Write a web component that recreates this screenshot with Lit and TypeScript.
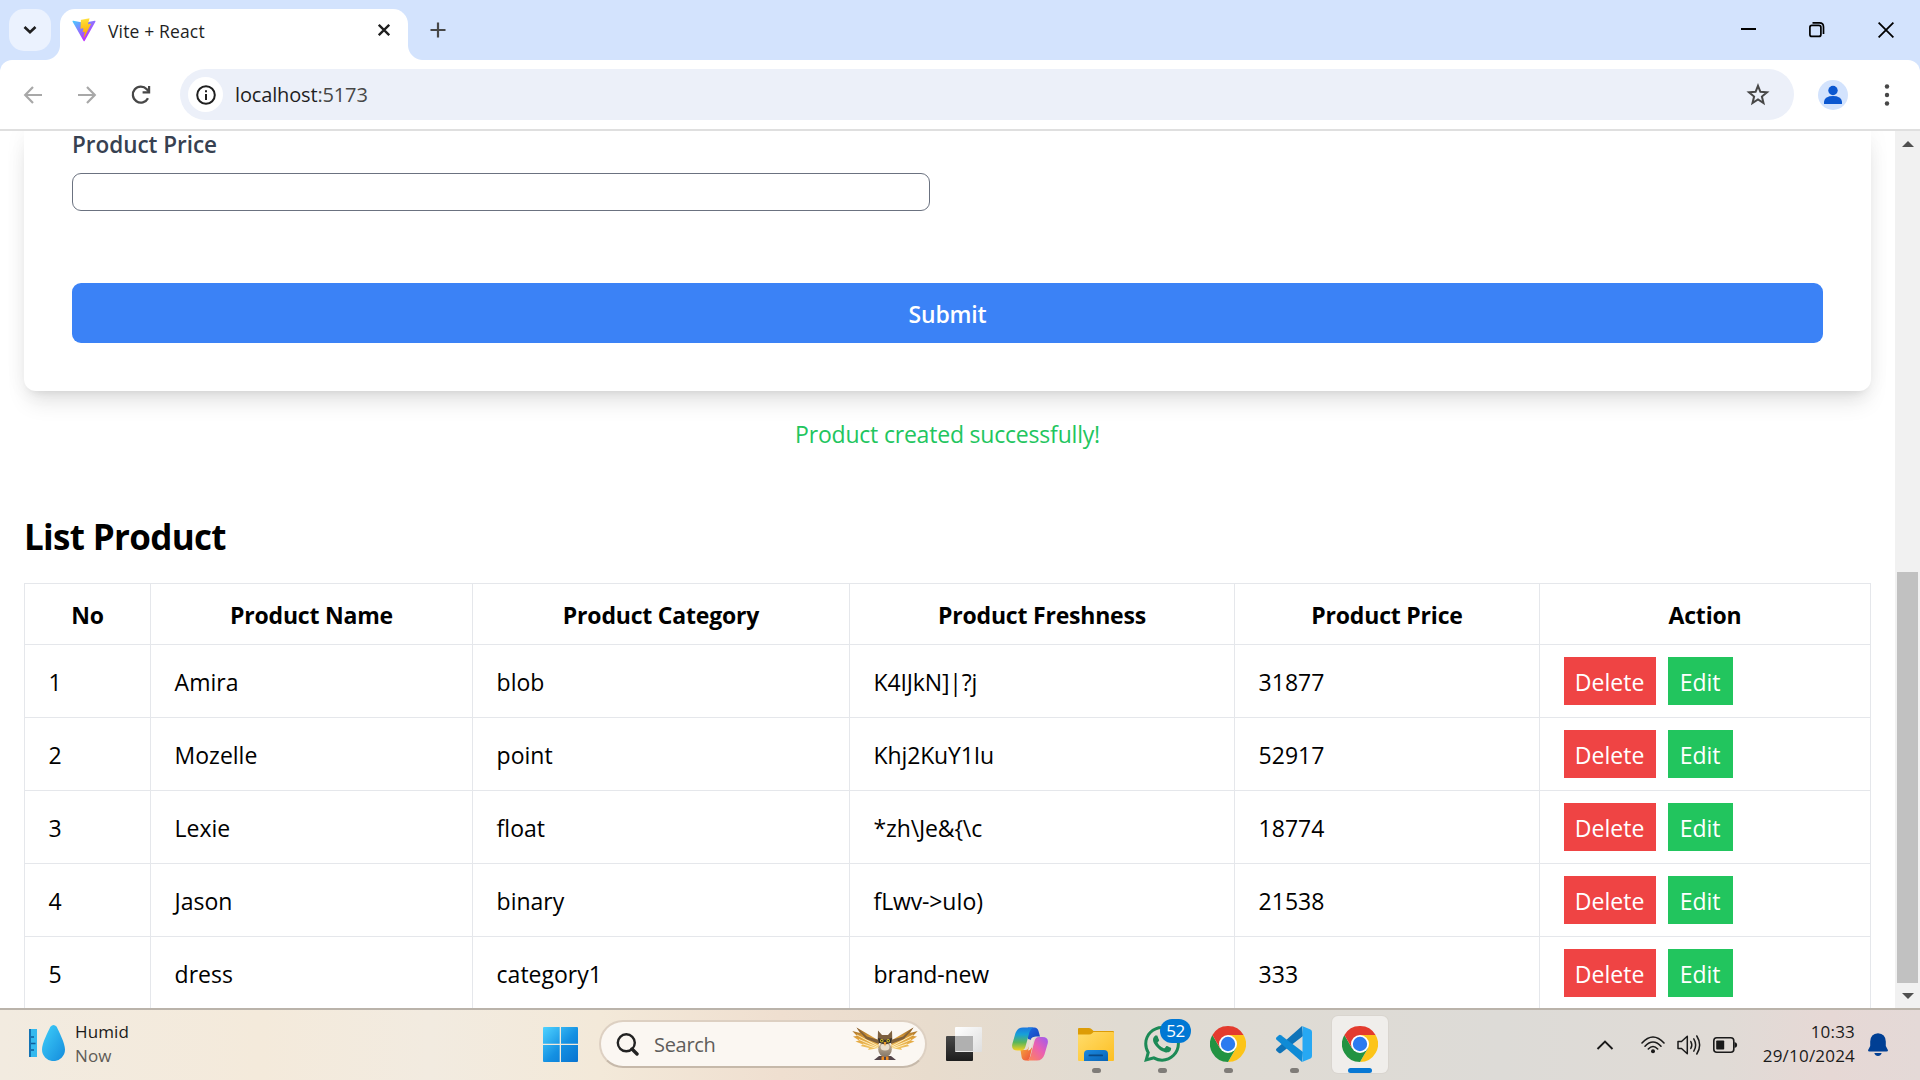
import { LitElement, html, css } from "lit";
import { customElement } from "lit/decorators.js";

interface Product {
  no: number;
  name: string;
  category: string;
  freshness: string;
  price: string;
}

const PRODUCTS: Product[] = [
  { no: 1, name: "Amira", category: "blob", freshness: "K4IJkN]|?j", price: "31877" },
  { no: 2, name: "Mozelle", category: "point", freshness: "Khj2KuY1Iu", price: "52917" },
  { no: 3, name: "Lexie", category: "float", freshness: "*zh\\Je&{\\c", price: "18774" },
  { no: 4, name: "Jason", category: "binary", freshness: "fLwv->uIo)", price: "21538" },
  { no: 5, name: "dress", category: "category1", freshness: "brand-new", price: "333" },
];

const chevronDown = html`<svg width="14" height="10" viewBox="0 0 14 10"><path d="M1.5 2 L7 7.3 L12.5 2" fill="none" stroke="#1f1f1f" stroke-width="2.6"/></svg>`;

const viteLogo = html`<svg width="24" height="24" viewBox="0 0 410 404">
  <defs>
    <linearGradient id="va" x1="6" y1="33" x2="235" y2="344" gradientUnits="userSpaceOnUse"><stop stop-color="#41D1FF"/><stop offset="1" stop-color="#BD34FE"/></linearGradient>
    <linearGradient id="vb" x1="194.651" y1="8.818" x2="236.076" y2="292.989" gradientUnits="userSpaceOnUse"><stop stop-color="#FFEA83"/><stop offset=".083" stop-color="#FFDD35"/><stop offset="1" stop-color="#FFA800"/></linearGradient>
  </defs>
  <path fill="url(#va)" d="M399.641 59.5246L215.643 388.545C211.844 395.338 202.084 395.378 198.228 388.618L10.5817 59.5563C6.38087 52.1896 12.6802 43.2665 21.0281 44.7586L205.223 77.6824C206.398 77.8924 207.601 77.8904 208.776 77.6763L389.119 44.8058C397.439 43.2894 403.768 52.1434 399.641 59.5246Z"/>
  <path fill="url(#vb)" d="M292.965 1.5744L156.801 28.2552C154.563 28.6937 152.906 30.5903 152.771 32.8664L144.395 174.33C144.198 177.662 147.258 180.248 150.51 179.498L188.42 170.749C191.967 169.931 195.172 173.055 194.443 176.622L183.18 231.775C182.422 235.487 185.907 238.661 189.532 237.56L212.947 230.446C216.577 229.344 220.065 232.527 219.297 236.242L201.398 322.875C200.278 328.294 207.486 331.249 210.492 326.603L212.5 323.5L323.454 102.072C325.312 98.3645 322.108 94.137 318.036 94.9228L279.014 102.454C275.347 103.161 272.227 99.746 273.262 96.1583L298.731 7.86689C299.767 4.27314 296.636 0.855181 292.965 1.5744Z"/>
</svg>`;

const chromeLogo = html`<svg width="36" height="36" viewBox="0 0 36 36">
  <circle cx="18" cy="18" r="17.500" fill="#fff"/>
  <path d="M18 18 L18 9 L33.59 9 A18 18 0 0 1 18 36 L25.79 22.5 Z" fill="#fcc419"/>
  <path d="M2.41 9 A18 18 0 0 0 18 36 L25.79 22.5 L18 18 L10.21 22.5 Z" fill="#229342"/>
  <path d="M2.41 9 A18 18 0 0 1 33.59 9 L18 9 L18 18 L10.21 22.5 Z" fill="#e33b2e"/>
  <circle cx="18" cy="18" r="9" fill="#fff"/>
  <circle cx="18" cy="18" r="7.2" fill="#2b7bf0"/>
</svg>`;

const weatherIcon = html`<svg width="36" height="36" viewBox="0 0 36 36">
  <defs>
    <linearGradient id="wd" x1="0" y1="0" x2="1" y2="1"><stop offset="0" stop-color="#3fd0fa"/><stop offset="1" stop-color="#148bdc"/></linearGradient>
  </defs>
  <rect x="0" y="4" width="8" height="28" fill="#35b9ee"/><rect x="0" y="4" width="2" height="28" fill="#1373b4"/>
  <path d="M2 12h3M2 18.5h4.5M2 25h3" stroke="#0f5f9c" stroke-width="1.6"/>
  <path d="M21.4 1.8 Q24.5 -1.8 27.7 1.8 C30 7 36 18 36 24.6 A11.5 11.5 0 0 1 13 24.6 C13 18 19 7 21.4 1.8 Z" fill="url(#wd)"/>
</svg>`;

const startIcon = html`<svg width="35" height="35" viewBox="0 0 35 35">
  <defs><linearGradient id="st" x1="0" y1="0" x2="35" y2="35" gradientUnits="userSpaceOnUse"><stop stop-color="#4fd3ff"/><stop offset=".55" stop-color="#1490e2"/><stop offset="1" stop-color="#0873d0"/></linearGradient></defs>
  <path fill="url(#st)" d="M1 0H16.7V16.7H0V1Q0 0 1 0ZM18 0H34Q35 0 35 1V16.7H18ZM0 18H16.7V35H1Q0 35 0 34ZM18 18H35V34Q35 35 34 35H18Z"/>
</svg>`;

const owlIcon = html`<svg width="66" height="34" viewBox="0 0 66 34">
  <defs>
    <linearGradient id="ow" x1="0" y1="0" x2="0" y2="1"><stop offset="0" stop-color="#8a5a20"/><stop offset=".45" stop-color="#dfa03a"/><stop offset="1" stop-color="#f3c766"/></linearGradient>
    <linearGradient id="ob" x1="0" y1="0" x2="0" y2="1"><stop offset="0" stop-color="#c9b69c"/><stop offset="1" stop-color="#857768"/></linearGradient>
    <g id="wing">
      <path d="M27 21 L26 13 L4.500 .5 L8 6 L.3 4 L5 9 L1 9.500 L7 13.500 L3.500 14.500 L11 17.500 L8.500 19 L17 21 L16 23 Z" fill="url(#ow)"/>
      <path d="M4.500 .5 L15 9.500 L27 13 L27 17 L14 12 Z" fill="#80603a"/>
      <path d="M5 8 L26 19 M7 12.500 L26 20.500 M11 17 L25 21.500" stroke="#fff2c9" stroke-width=".9"/>
    </g>
  </defs>
  <use href="#wing"/><use href="#wing" transform="translate(66 0) scale(-1 1)"/>
  <path d="M22 33 L27 29 L39 29 L44 33 Z" fill="#54454a"/>
  <ellipse cx="33" cy="22.500" rx="6.800" ry="7.500" fill="url(#ob)"/>
  <ellipse cx="33" cy="20" rx="4.500" ry="3.500" fill="#eadfcd"/>
  <path d="M26 3.500 L30 8 L36 8 L40 3.500 L40.300 13 Q38 17 33 17.500 Q28 17 25.700 13 Z" fill="#7d603f"/>
  <path d="M26 11 L33 13 L40 11 L39 16 L33 17 L27 16 Z" fill="#33302c"/>
  <circle cx="29.800" cy="13.800" r="1.700" fill="#d9c52c"/><circle cx="36.200" cy="13.800" r="1.700" fill="#d9c52c"/>
  <circle cx="29.800" cy="13.800" r=".8" fill="#111"/><circle cx="36.200" cy="13.800" r=".8" fill="#111"/>
  <path d="M31.500 15 L34.500 15 L33 19.500 Z" fill="#f0a030"/>
  <path d="M29.500 29.500h2.500v3.500h-2.500zM34 29.500h2.500v3.500h-2.500z" fill="#ee8c22"/>
</svg>`;

const taskViewIcon = html`<svg width="36" height="36" viewBox="0 0 36 36">
  <defs>
    <linearGradient id="td" x1="0" y1="0" x2="0" y2="1"><stop stop-color="#484848"/><stop offset="1" stop-color="#1d1d1d"/></linearGradient>
    <linearGradient id="tl" x1="0" y1="0" x2="1" y2="1"><stop stop-color="#fff"/><stop offset="1" stop-color="#dedede"/></linearGradient>
  </defs>
  <rect x="0" y="10" width="27" height="25" rx="1" fill="url(#td)"/>
  <rect x="9" y="1" width="27" height="25" rx="1" fill="url(#tl)"/>
  <rect x="9" y="10" width="18" height="15" fill="#b0b0b0"/>
</svg>`;

const copilotIcon = html`<svg width="36" height="34" viewBox="0 0 36 34">
  <defs>
    <linearGradient id="c1" x1="0" y1="0" x2="0" y2="1"><stop stop-color="#1b78e0"/><stop offset=".3" stop-color="#17a0d8"/><stop offset=".65" stop-color="#5bb65a"/><stop offset="1" stop-color="#f5d020"/></linearGradient>
    <linearGradient id="c2" x1="1" y1="0" x2="0" y2="1"><stop stop-color="#9a5cf2"/><stop offset=".45" stop-color="#ea5fb2"/><stop offset="1" stop-color="#ff8a4c"/></linearGradient>
    <linearGradient id="c3" x1="0" y1="0" x2="1" y2="1"><stop stop-color="#1a6ae0"/><stop offset="1" stop-color="#1b3fbc"/></linearGradient>
    <linearGradient id="c4" x1="0" y1="0" x2="1" y2="1"><stop stop-color="#f5a93c"/><stop offset="1" stop-color="#ee4b3c"/></linearGradient>
  </defs>
  <path d="M16 .5 H22.500 Q25.500 .5 26.500 4 L28 9.500 H24 Q20.500 9.500 19.500 13 L16 12 Z" fill="url(#c3)"/>
  <path d="M8.500 23 H13.500 Q16 23 17 19.500 L20 21 L17 33.500 H13.500 Q10.500 33.500 9.700 30.500 Z" fill="url(#c4)"/>
  <path d="M11 .5 H21.500 Q18.500 1.500 17.500 5 L13.500 19.500 Q12.500 23.500 9 23.500 H5.500 Q-1 23.500 .3 17 L3.500 6 Q5.500 .5 11 .5 Z" fill="url(#c1)"/>
  <path d="M25 33.500 H14.500 Q17.500 32.500 18.500 29 L22.500 14 Q23.500 10 27 10 H30.500 Q37 10 35.700 16.500 L32.500 27.500 Q30.500 33.500 25 33.500 Z" fill="url(#c2)"/>
  <path d="M19.300 11.500 Q20 10 22 10 L19 21.500 Q18.300 23.500 16 23.500 Z" fill="#ebe3da"/>
</svg>`;

const explorerIcon = html`<svg width="36" height="34" viewBox="0 0 36 34">
  <defs>
    <linearGradient id="ex" x1="0" y1="0" x2="1" y2="1"><stop stop-color="#ffdc6c"/><stop offset="1" stop-color="#fdbf22"/></linearGradient>
    <linearGradient id="eb" x1="0" y1="0" x2="1" y2="1"><stop stop-color="#1b8ae0"/><stop offset="1" stop-color="#0a64b6"/></linearGradient>
  </defs>
  <path d="M0 2 Q0 1 1 1 H11 Q13 1 14 2.500 L15.500 4 H35 Q36 4 36 5 V12 H0 Z" fill="#dd9c06"/>
  <path d="M0 7.500 H11 Q13 7.500 14.500 6 L15.500 5 H35 Q36 5 36 6 V33 Q36 34 35 34 H1 Q0 34 0 33 Z" fill="url(#ex)"/>
  <path d="M6 34 V27 Q6 23 10 23 H26 Q30 23 30 27 V34 Z" fill="url(#eb)"/>
  <rect x="10.500" y="27.500" width="14.500" height="1.800" rx=".9" fill="#0a4a86"/>
</svg>`;

const whatsappIcon = html`<svg width="36" height="36" viewBox="0 0 24 24"><path fill="#1c8a56" d="M17.472 14.382c-.297-.149-1.758-.867-2.03-.967-.273-.099-.471-.148-.67.15-.197.297-.767.966-.94 1.164-.173.199-.347.223-.644.075-.297-.15-1.255-.463-2.39-1.475-.883-.788-1.48-1.761-1.653-2.059-.173-.297-.018-.458.13-.606.134-.133.298-.347.446-.52.149-.174.198-.298.298-.497.099-.198.05-.371-.025-.52-.075-.149-.669-1.612-.916-2.207-.242-.579-.487-.5-.669-.51-.173-.008-.371-.01-.57-.01-.198 0-.52.074-.792.372-.272.297-1.040 1.016-1.040 2.479 0 1.462 1.065 2.875 1.213 3.074.149.198 2.096 3.200 5.077 4.487.709.306 1.262.489 1.694.625.712.227 1.360.195 1.871.118.571-.085 1.758-.719 2.006-1.413.248-.694.248-1.289.173-1.413-.074-.124-.272-.198-.57-.347m-5.421 7.403h-.004a9.870 9.870 0 0 1-5.031-1.378l-.361-.214-3.741.982.998-3.648-.235-.374a9.860 9.860 0 0 1-1.510-5.260c.001-5.450 4.436-9.884 9.888-9.884 2.640 0 5.122 1.030 6.988 2.898a9.825 9.825 0 0 1 2.893 6.994c-.003 5.450-4.437 9.884-9.885 9.884m8.413-18.297A11.815 11.815 0 0 0 12.050 0C5.495 0 .160 5.335.157 11.892c0 2.096.547 4.142 1.588 5.945L.057 24l6.305-1.654a11.882 11.882 0 0 0 5.683 1.448h.005c6.554 0 11.890-5.335 11.893-11.893a11.821 11.821 0 0 0-3.480-8.413z"/></svg>`;

const vscodeIcon = html`<svg width="36" height="36" viewBox="0 0 36 36">
  <path d="M26 0 L27 10 L5 27 Q3.800 27.800 2.600 26.800 L.6 25 Q-.6 23.800 .6 22.500 Z" fill="#0f73b8"/>
  <path d="M26 36 L27 26 L5 9.200 Q3.800 8.400 2.600 9.400 L.6 11.200 Q-.6 12.400 .6 13.700 Z" fill="#0f8bd6"/>
  <path d="M26 0 L34.500 3.500 Q36 4.200 36 6 V30 Q36 31.800 34.500 32.500 L26 36 Q26.500 35.500 26.500 34 V2 Q26.500 .5 26 0 Z" fill="#27a8f3"/>
</svg>`;

const trayChevron = html`<svg width="18" height="12" viewBox="0 0 18 12"><path d="M1.500 10 L9 2.500 L16.500 10" fill="none" stroke="#1a1a1a" stroke-width="1.900"/></svg>`;

const wifiIcon = html`<svg width="24" height="18" viewBox="0 0 24 18"><g fill="none" stroke="#1a1a1a" stroke-width="1.600" stroke-linecap="round"><path d="M1 7 Q12 -5 23 7"/><path d="M4 10.200 Q12 1.800 20 10.200"/><path d="M7.300 13 Q12 8 16.700 13"/></g><circle cx="12" cy="15.300" r="2" fill="#1a1a1a"/></svg>`;

const speakerIcon = html`<svg width="25" height="20" viewBox="0 0 25 20"><g fill="none" stroke="#1a1a1a" stroke-width="1.500" stroke-linecap="round" stroke-linejoin="round"><path d="M1 6.500 H4.500 L10.300 1.200 V18.800 L4.500 13.500 H1 Z"/><path d="M13.800 6.500 Q15.800 10 13.800 13.500"/><path d="M16.800 3.800 Q20.500 10 16.800 16.200"/><path d="M19.800 1 Q25.500 10 19.800 19"/></g></svg>`;

const batteryIcon = html`<svg width="25" height="16" viewBox="0 0 25 16"><rect x=".8" y=".8" width="20" height="14.400" rx="3" fill="none" stroke="#1a1a1a" stroke-width="1.600"/><rect x="3.200" y="3.500" width="8" height="9" rx=".8" fill="#1a1a1a"/><path d="M21.500 5 Q24.200 5.500 24.200 8 Q24.200 10.500 21.500 11 Z" fill="#1a1a1a"/></svg>`;

const bellIcon = html`<svg width="20" height="24" viewBox="0 0 20 24"><path d="M10 0.300 Q17.500 .8 17.800 8.500 V13 L20 17.300 Q20 18.500 18.500 18.500 H1.500 Q0 18.500 0 17.300 L2.200 13 V8.500 Q2.500 .8 10 .3 Z M6.300 20 H13.700 Q12.800 23 10 23 Q7.200 23 6.300 20 Z" fill="#003f94"/></svg>`;

const minimizeIcon = html`<svg width="15" height="16" viewBox="0 0 15 16"><path d="M0 7H15" stroke="#000" stroke-width="2"/></svg>`;
const restoreIcon = html`<svg width="16" height="16" viewBox="0 0 16 16"><g fill="none" stroke="#000" stroke-width="1.700"><rect x=".9" y="3.400" width="11" height="11" rx="2"/><path d="M3.500 .9 H10.500 Q14.500 .9 14.500 4.900 V12"/></g></svg>`;
const closeWindowIcon = html`<svg width="16" height="16" viewBox="0 0 16 16"><path d="M.6 .6 L15.400 15.400 M15.400 .6 L.6 15.400" stroke="#000" stroke-width="1.800"/></svg>`;

@customElement("browser-chrome")
export class BrowserChrome extends LitElement {
  static styles = css`
    :host { display: block; background: #d3e3fd; font-family: "Open Sans", "Noto Sans", sans-serif; }
    svg { display: block; flex: none; }
    .strip { display: flex; height: 60px; box-sizing: border-box; padding: 9px 0 0 9px; }
    .menu { width: 42px; height: 42px; border-radius: 15px; background: #ebf2fe; display: grid; place-items: center; margin-right: -6px; }
    .foot { width: 15px; height: 15px; align-self: flex-end; }
    .foot-left { background: radial-gradient(circle at 0 0, transparent 14.500px, #fff 15.500px); }
    .foot-right { background: radial-gradient(circle at 100% 0, transparent 14.500px, #fff 15.500px); }
    .tab { display: flex; width: 348px; height: 51px; box-sizing: border-box; padding: 9px 18px 0 12px; background: #fff; border-radius: 15px 15px 0 0; }
    .tab-title { flex: 1; margin-left: 12px; font-size: 17.500px; line-height: 24px; padding-top: 1px; color: #1f1f1f; white-space: nowrap; letter-spacing: .15px; }
    .tab-close { padding-top: 6px; }
    .plus { padding: 13px 0 0 7px; }
    .controls { display: flex; flex: 1; justify-content: flex-end; gap: 53px; padding: 13px 26px 0 0; }
    .toolbar { display: flex; align-items: center; height: 69px; background: #fff; border-radius: 12px 12px 0 0; border-bottom: 2px solid #dfdfdf; padding: 0 30px 0 23px; }
    .back { margin-right: 34px; }
    .forward { margin-right: 34px; }
    .reload { margin-right: 29px; }
    .omnibox { display: flex; align-items: center; flex: none; width: 1614px; height: 51px; box-sizing: border-box; border-radius: 26px; background: #ecf0f9; padding: 0 24px 0 8px; margin-right: 24px; }
    .info { width: 35px; height: 35px; border-radius: 50%; background: #fff; display: grid; place-items: center; margin-right: 12px; }
    .url { flex: 1; font-size: 20px; line-height: 30px; color: #1f1f1f; letter-spacing: -.15px; }
    .port { color: #474747; }
    .avatar { margin-right: 36px; }
  `;

  render() {
    return html`
      <div class="strip">
        <div class="menu">${chevronDown}</div>
        <div class="foot foot-left"></div>
        <div class="tab">
          ${viteLogo}
          <span class="tab-title">Vite + React</span>
          <span class="tab-close"><svg width="12" height="12" viewBox="0 0 12 12"><path d="M.8 .8 L11.200 11.200 M11.200 .8 L.8 11.200" stroke="#1f1f1f" stroke-width="2.300"/></svg></span>
        </div>
        <div class="foot foot-right"></div>
        <div class="plus"><svg width="16" height="16" viewBox="0 0 16 16"><path d="M8 .5V15.500M.5 8H15.500" stroke="#474747" stroke-width="2.200"/></svg></div>
        <div class="controls">${minimizeIcon}${restoreIcon}${closeWindowIcon}</div>
      </div>
      <div class="toolbar">
        <svg class="back" width="20" height="18" viewBox="0 0 20 18"><path d="M19 9H2.500M10 1L2.200 9L10 17" fill="none" stroke="#a8a8a8" stroke-width="2.200"/></svg>
        <svg class="forward" width="20" height="18" viewBox="0 0 20 18"><path d="M1 9H17.500M10 1L17.800 9L10 17" fill="none" stroke="#a8a8a8" stroke-width="2.200"/></svg>
        <svg class="reload" width="20" height="20" viewBox="0 0 20 20"><path d="M17 13.200 A8 8 0 1 1 15.800 4.200 L18 6.600" fill="none" stroke="#474747" stroke-width="2.300"/><path d="M19.200 1 V8.400 H11.600 V6.200 H17 V1 Z" fill="#474747"/></svg>
        <div class="omnibox">
          <div class="info"><svg width="20" height="20" viewBox="0 0 20 20"><circle cx="10" cy="10" r="8.800" fill="none" stroke="#1f1f1f" stroke-width="2"/><path d="M10 9V15M10 5.200V7.200" stroke="#1f1f1f" stroke-width="2"/></svg></div>
          <span class="url">localhost<span class="port">:5173</span></span>
          <svg width="24" height="23" viewBox="0 0 24 23"><path d="M12 2.800 L14.400 8.800 L21 9.300 L15.900 13.500 L17.500 20 L12 16.500 L6.500 20 L8.100 13.500 L3 9.300 L9.600 8.800 Z" fill="none" stroke="#474747" stroke-width="2"/></svg>
        </div>
        <svg class="avatar" width="30" height="30" viewBox="0 0 30 30"><circle cx="15" cy="15" r="15" fill="#d3e3fd"/><circle cx="15" cy="10.500" r="4.700" fill="#0b57d0"/><path d="M6 24 V21.500 Q7 16 15 16 Q23 16 24 21.500 V24 Z" fill="#0b57d0"/></svg>
        <svg width="6" height="24" viewBox="0 0 6 24"><g fill="#474747"><circle cx="3" cy="3.500" r="2.200"/><circle cx="3" cy="12" r="2.200"/><circle cx="3" cy="20.500" r="2.200"/></g></svg>
      </div>
    `;
  }
}

@customElement("product-page")
export class ProductPage extends LitElement {
  static styles = css`
    :host { display: flex; background: #fff; overflow: hidden; font-family: "Open Sans", "Noto Sans", sans-serif; font-size: 23px; line-height: 36px; color: #000; }
    .main { width: 1847px; flex: none; padding: 0 24px; }
    .card { height: 260px; box-sizing: border-box; padding: 0 48px; border-radius: 0 0 12px 12px; box-shadow: 0 15px 22px -4px rgba(0, 0, 0, .1), 0 6px 9px -6px rgba(0, 0, 0, .1), 0 0 22px rgba(0, 0, 0, .05); display: flex; flex-direction: column; background: #fff; }
    .label { height: 42px; line-height: 28px; font-size: 22.500px; font-weight: 600; color: #374151; letter-spacing: -.03px; }
    .field { width: 858px; height: 38px; box-sizing: border-box; border: 1.500px solid #6b7280; border-radius: 9px; }
    .submit { all: unset; box-sizing: border-box; margin-top: 72px; height: 60px; border-radius: 9px; background: #3b82f6; color: #fff; font-weight: 600; text-align: center; line-height: 62px; letter-spacing: -.2px; }
    .notice { margin-top: 24px; padding-top: 1px; text-align: center; color: #22c55e; letter-spacing: -.2px; height: 37px; }
    .heading { margin: 57px 0 0; height: 73px; font-size: 35px; line-height: 54px; font-weight: 700; letter-spacing: -.68px; }
    .table { display: grid; grid-template-columns: 126px 322px 377px 385px 305px 1fr; border-top: 1.500px solid #e5e7eb; border-left: 1.500px solid #e5e7eb; }
    .cell { box-sizing: border-box; border-right: 1.500px solid #e5e7eb; border-bottom: 1.500px solid #e5e7eb; padding: 0 23.600px; height: 73px; line-height: 74px; white-space: nowrap; }
    .symbols { letter-spacing: -.15px; }
    .head { height: 61px; line-height: 62px; font-weight: 700; text-align: center; padding: 0; letter-spacing: -.2px; }
    .actions { display: flex; align-items: center; gap: 12px; }
    .button { all: unset; box-sizing: border-box; height: 48px; line-height: 50px; text-align: center; color: #fff; }
    .delete { width: 92px; background: #ef4444; }
    .edit { width: 65px; background: #22c55e; }
    .scrollbar { width: 25px; box-sizing: border-box; background: #f1f1f1; padding: 10px 2px 9px; display: flex; flex-direction: column; align-items: center; }
    .thumb { margin-top: 425px; width: 21px; height: 411px; background: #c1c1c1; margin-bottom: 10px; }
    .arrow { border: 6px solid transparent; width: 0; height: 0; box-sizing: border-box; }
    .up { border-top: 0; border-bottom-color: #505050; }
    .down { border-bottom: 0; border-top-color: #505050; }
  `;

  render() {
    const heads = ["No", "Product Name", "Product Category", "Product Freshness", "Product Price", "Action"];
    return html`
      <div class="main">
        <div class="card">
          <span class="label">Product Price</span>
          <div class="field"></div>
          <button class="submit">Submit</button>
        </div>
        <div class="notice">Product created successfully!</div>
        <h2 class="heading">List Product</h2>
        <div class="table">
          ${heads.map((h) => html`<div class="cell head">${h}</div>`)}
          ${PRODUCTS.map(
            (p) => html`
              <div class="cell">${p.no}</div>
              <div class="cell">${p.name}</div>
              <div class="cell">${p.category}</div>
              <div class="cell symbols">${p.freshness}</div>
              <div class="cell">${p.price}</div>
              <div class="cell actions"><button class="button delete">Delete</button><button class="button edit">Edit</button></div>
            `
          )}
        </div>
      </div>
      <div class="scrollbar">
        <div class="arrow up"></div>
        <div class="thumb"></div>
        <div class="arrow down"></div>
      </div>
    `;
  }
}

@customElement("task-bar")
export class TaskBar extends LitElement {
  static styles = css`
    :host { display: flex; height: 72px; box-sizing: border-box; border-top: 2px solid #bab3aa; background: linear-gradient(90deg, #f2ebe0 0, #f4eadb 260px, #f2ebe0 430px, #f3e9d9 600px, #efdfd0 780px, #e8dccd 930px, #e0dbd2 1120px, #dddbd7 1500px, #e0dbd6 1720px, #e6d8d5 1830px, #e4d9d7 1920px); font-family: "Open Sans", "Noto Sans", sans-serif; font-size: 17px; line-height: 24px; color: #1a1a1a; }
    svg { display: block; flex: none; }
    .weather { display: flex; flex: none; width: 543px; box-sizing: border-box; padding: 15px 0 0 29px; gap: 10px; }
    .weather-text { display: flex; flex-direction: column; margin-top: -5px; letter-spacing: .1px; }
    .muted { color: #5f5b56; }
    .start { padding-top: 17px; width: 56px; flex: none; }
    .search { display: flex; flex: none; align-items: center; margin-top: 10px; width: 328px; height: 48px; box-sizing: border-box; border: 2px solid #ddd0c2; border-bottom-color: #c6b9aa; border-radius: 24px; background: #fbf7f2; padding: 0 7px 0 15px; margin-right: 4px; }
    .search-text { flex: 1; margin-left: 15px; font-size: 20px; line-height: 28px; padding-top: 1px; color: #5f5d5b; letter-spacing: -.3px; }
    .apps { display: flex; flex: none; }
    .app { position: relative; width: 56px; height: 57px; margin: 6px 5px 0; box-sizing: border-box; display: flex; flex-direction: column; align-items: center; padding-top: 10px; border-radius: 6px; }
    .app.active { background: #f0eeeb; box-shadow: 0 0 0 1px #d9d5cf; }
    .icon { height: 42px; }
    .low { height: 42px; padding-top: 1px; box-sizing: border-box; }
    .dot { width: 9px; height: 5px; border-radius: 3px; background: #7f7c78; }
    .active .dot { width: 24px; background: #0878d4; }
    .badge { position: absolute; left: 26px; top: 3px; width: 31px; height: 24px; border-radius: 12px; background: #0078d4; color: #fff; font-size: 17px; line-height: 24px; text-align: center; letter-spacing: -.5px; }
    .tray { flex: 1; display: flex; align-items: center; justify-content: flex-end; padding-right: 32px; }
    .tray-chevron { margin-right: 27px; }
    .wifi { margin-right: 12px; }
    .speaker { margin-right: 11px; }
    .clock { width: 117px; text-align: right; display: flex; flex-direction: column; margin-right: 13px; letter-spacing: .2px; margin-top: -3px; }
  `;

  private app(icon: unknown, running: boolean, options: { badge?: string; active?: boolean; low?: boolean } = {}) {
    return html`<div class="app ${options.active ? "active" : ""}">
      <div class="${options.low ? "low" : "icon"}">${icon}</div>
      ${running ? html`<div class="dot"></div>` : ""}
      ${options.badge ? html`<div class="badge">${options.badge}</div>` : ""}
    </div>`;
  }

  render() {
    return html`
      <div class="weather">${weatherIcon}<div class="weather-text"><span>Humid</span><span class="muted">Now</span></div></div>
      <div class="start">${startIcon}</div>
      <div class="search">
        <svg width="23" height="23" viewBox="0 0 23 23"><circle cx="10.300" cy="9.800" r="8.500" fill="none" stroke="#222" stroke-width="2.400"/><path d="M16 16 L21 21" stroke="#222" stroke-width="3.400" stroke-linecap="round"/></svg>
        <span class="search-text">Search</span>
        ${owlIcon}
      </div>
      <div class="apps">
        ${this.app(taskViewIcon, false)}
        ${this.app(copilotIcon, false, { low: true })}
        ${this.app(explorerIcon, true, { low: true })}
        ${this.app(whatsappIcon, true, { badge: "52" })}
        ${this.app(chromeLogo, true)}
        ${this.app(vscodeIcon, true)}
        ${this.app(chromeLogo, true, { active: true })}
      </div>
      <div class="tray">
        <div class="tray-chevron">${trayChevron}</div>
        <div class="wifi">${wifiIcon}</div>
        <div class="speaker">${speakerIcon}</div>
        ${batteryIcon}
        <div class="clock"><span>10:33</span><span>29/10/2024</span></div>
        ${bellIcon}
      </div>
    `;
  }
}

@customElement("app-root")
export class AppRoot extends LitElement {
  static styles = css`
    :host { display: flex; flex-direction: column; width: 1920px; height: 1080px; overflow: hidden; }
    .chrome { flex: none; }
    .page { flex: 1; min-height: 0; }
    .taskbar { flex: none; }
  `;

  render() {
    return html`
      <browser-chrome class="chrome"></browser-chrome>
      <product-page class="page"></product-page>
      <task-bar class="taskbar"></task-bar>
    `;
  }
}
